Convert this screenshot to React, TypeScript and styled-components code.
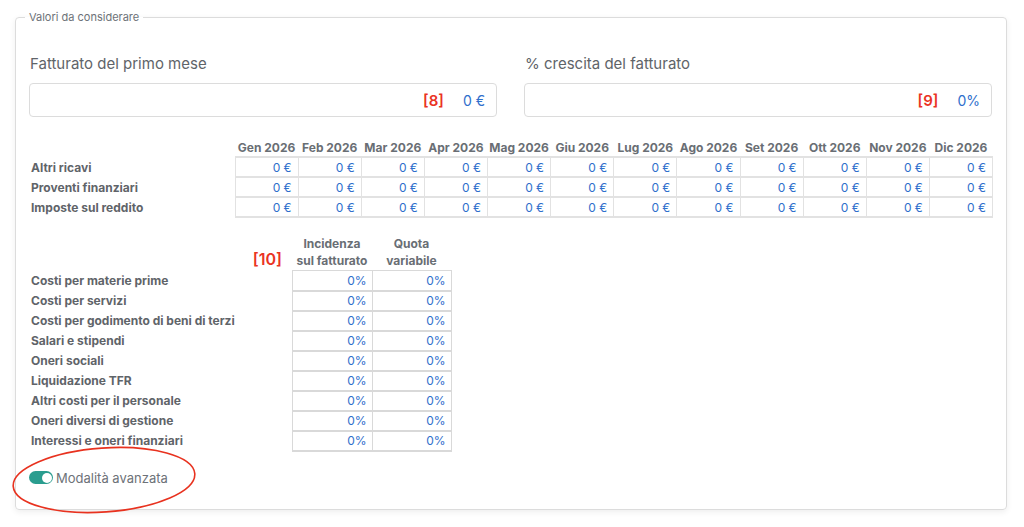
import React from "react";
import styled, { createGlobalStyle } from "styled-components";

const Global = createGlobalStyle`
  html, body { margin: 0; padding: 0; background: #ffffff; }
  body { font-family: "Inter", "Open Sans", sans-serif; color: #5f6469; }
  * { box-sizing: border-box; }
`;

const Page = styled.div`
  padding: 10px 18px 0 15px;
  width: 1024px;
  height: 527px;
  overflow: hidden;
`;

const Box = styled.fieldset`
  position: relative;
  margin: 0;
  width: 991px;
  border: 1px solid #dcdcdc;
  border-radius: 4px;
  padding: 30px 13px 23px 13px;
  box-shadow: 0 2px 6px rgba(0, 0, 0, 0.07);
`;

const Legend = styled.legend`
  margin-left: -4px;
  padding: 0 4px;
  font-size: 11px;
  color: #6d7278;
  line-height: 14px;
`;

const TopGrid = styled.div`
  display: grid;
  grid-template-columns: 468px 468px;
  column-gap: 27px;
`;

const Field = styled.div`
  display: flex;
  flex-direction: column;
  gap: 9px;
`;

const FieldLabel = styled.div`
  font-size: 15px;
  line-height: 20px;
  color: #5f6469;
  padding-left: 1px;
`;

const InputBox = styled.div`
  height: 34px;
  border: 1px solid #dcdcdc;
  border-radius: 4px;
  display: flex;
  align-items: center;
  justify-content: flex-end;
  gap: 19px;
  padding-right: 11px;
`;

const Tag = styled.span<{ $size?: number }>`
  color: #ea3323;
  font-weight: 600;
  font-size: ${(p) => p.$size ?? 15}px;
`;

const Value = styled.span`
  color: #2f6fcc;
  font-size: 14px;
`;

const MonthTable = styled.table`
  margin-top: 21px;
  border-collapse: collapse;
  width: 964px;
  table-layout: fixed;
  font-size: 12px;
`;

const HeadCell = styled.th<{ $align?: string }>`
  font-weight: 700;
  color: #696e74;
  text-align: ${(p) => p.$align ?? "center"};
  height: 19px;
  padding: 0;
  white-space: nowrap;
  font-size: 12px;
`;

const RowLabel = styled.td`
  font-weight: 700;
  color: #5f6469;
  padding: 0 0 0 2px;
  height: 20px;
  white-space: nowrap;
  font-size: 12px;
`;

const NumCell = styled.td`
  color: #2f6fcc;
  text-align: right;
  padding: 0 6px 0 0;
  height: 20px;
  border: 2px solid #e2e2e2;
  border-width: 2px 1px 0 1px;
  font-size: 12px;
`;

const LastRow = styled.tr`
  & > td:not(:first-child) { border-bottom: 2px solid #e2e2e2; }
`;

const CostTable = styled.table`
  margin-top: 17px;
  border-collapse: collapse;
  table-layout: fixed;
  font-size: 12px;
`;

const CostHead = styled.th`
  font-weight: 700;
  color: #696e74;
  text-align: center;
  line-height: 17px;
  padding: 0 0 1px 0;
  font-size: 12px;
  vertical-align: bottom;
`;

const TagHead = styled.th`
  text-align: right;
  padding: 0 10px 2px 0;
  vertical-align: bottom;
`;

const CostCell = styled.td`
  color: #2f6fcc;
  text-align: right;
  padding: 0 5px 0 0;
  height: 20px;
  border: 1px solid #d9d9d9;
  border-bottom-width: 2px;
  font-size: 12px;
`;

const ToggleRow = styled.div`
  margin-top: 18px;
  display: flex;
  align-items: center;
  gap: 3px;
  padding-left: 0;
`;

const Switch = styled.span`
  position: relative;
  width: 24px;
  height: 13px;
  border-radius: 7px;
  background: #2a9d8f;
  &::after {
    content: "";
    position: absolute;
    right: 1.5px;
    top: 1.5px;
    width: 10px;
    height: 10px;
    border-radius: 50%;
    background: #fff;
  }
`;

const ToggleText = styled.span`
  font-size: 13px;
  color: #6d7278;
`;

const Ellipse = styled.svg`
  position: absolute;
  left: -4px;
  top: 422px;
  overflow: visible;
  pointer-events: none;
`;

const months = ["Gen", "Feb", "Mar", "Apr", "Mag", "Giu", "Lug", "Ago", "Set", "Ott", "Nov", "Dic"];
const monthRows = ["Altri ricavi", "Proventi finanziari", "Imposte sul reddito"];
const costRows = [
  "Costi per materie prime",
  "Costi per servizi",
  "Costi per godimento di beni di terzi",
  "Salari e stipendi",
  "Oneri sociali",
  "Liquidazione TFR",
  "Altri costi per il personale",
  "Oneri diversi di gestione",
  "Interessi e oneri finanziari",
];

export default function App() {
  return (
    <Page>
      <Global />
      <Box>
        <Legend>Valori da considerare</Legend>
        <TopGrid>
          <Field>
            <FieldLabel>Fatturato del primo mese</FieldLabel>
            <InputBox>
              <Tag>[8]</Tag>
              <Value>0 €</Value>
            </InputBox>
          </Field>
          <Field>
            <FieldLabel>% crescita del fatturato</FieldLabel>
            <InputBox>
              <Tag>[9]</Tag>
              <Value>0%</Value>
            </InputBox>
          </Field>
        </TopGrid>

        <MonthTable>
          <colgroup>
            <col style={{ width: 206 }} />
            {months.map((m) => (
              <col key={m} />
            ))}
          </colgroup>
          <thead>
            <tr>
              <HeadCell />
              {months.map((m) => (
                <HeadCell key={m}>{m} 2026</HeadCell>
              ))}
            </tr>
          </thead>
          <tbody>
            {monthRows.map((r, i) => {
              const cells = months.map((m) => <NumCell key={m}>0 €</NumCell>);
              return i === monthRows.length - 1 ? (
                <LastRow key={r}>
                  <RowLabel>{r}</RowLabel>
                  {cells}
                </LastRow>
              ) : (
                <tr key={r}>
                  <RowLabel>{r}</RowLabel>
                  {cells}
                </tr>
              );
            })}
          </tbody>
        </MonthTable>

        <CostTable>
          <colgroup>
            <col style={{ width: 263 }} />
            <col style={{ width: 80 }} />
            <col style={{ width: 79 }} />
          </colgroup>
          <thead>
            <tr>
              <TagHead>
                <Tag $size={16}>[10]</Tag>
              </TagHead>
              <CostHead>
                Incidenza
                <br />
                sul fatturato
              </CostHead>
              <CostHead>
                Quota
                <br />
                variabile
              </CostHead>
            </tr>
          </thead>
          <tbody>
            {costRows.map((r) => (
              <tr key={r}>
                <RowLabel>{r}</RowLabel>
                <CostCell>0%</CostCell>
                <CostCell>0%</CostCell>
              </tr>
            ))}
          </tbody>
        </CostTable>

        <ToggleRow>
          <Switch />
          <ToggleText>Modalità avanzata</ToggleText>
        </ToggleRow>

        <Ellipse width="190" height="70" viewBox="0 0 190 70">
          <ellipse
            cx="92"
            cy="34"
            rx="91"
            ry="32"
            fill="none"
            stroke="#e8321f"
            strokeWidth="1.6"
            transform="rotate(-4 92 34)"
          />
        </Ellipse>
      </Box>
    </Page>
  );
}
